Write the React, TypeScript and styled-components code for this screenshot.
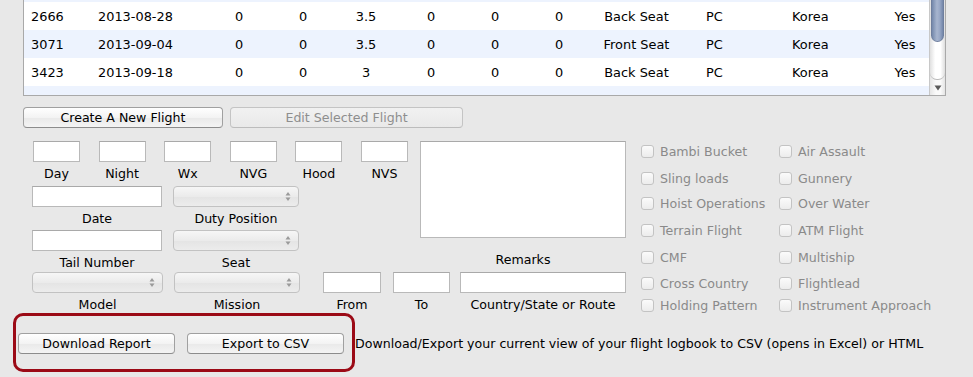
import React from 'react';
import styled, { createGlobalStyle } from 'styled-components';

const GlobalStyle = createGlobalStyle`
  html, body {
    margin: 0;
    padding: 0;
    background: #e8e8e8;
  }
  body {
    font-family: "DejaVu Sans", "Liberation Sans", sans-serif;
    font-size: 12.6px;
    color: #000;
  }
`;

const Page = styled.div`
  width: 973px;
  height: 377px;
  overflow: hidden;
  background: #e8e8e8;
`;

/* ---------- flight table ---------- */

const TableArea = styled.div`
  display: flex;
  margin-left: 23px;
  width: 923px;
  height: 96px;
  border-left: 1px solid #a9a9a9;
  border-bottom: 1px solid #a9a9a9;
  box-sizing: border-box;
  overflow: hidden;
`;

const Rows = styled.div`
  flex: 1;
  overflow: hidden;
`;

const RowList = styled.div`
  margin-top: -26px;
`;

const Row = styled.div<{ $odd: boolean }>`
  display: grid;
  grid-template-columns: 66px 117px 64px 64px 62px 68px 60px 68px 87px 100px 100px 50px;
  height: 28px;
  align-items: center;
  background: ${p => (p.$odd ? '#ffffff' : '#edf3fe')};
  font-size: 12.9px;
`;

const Cell = styled.div<{ $align?: 'left' | 'center'; $pad?: number }>`
  text-align: ${p => p.$align || 'center'};
  padding-left: ${p => p.$pad || 0}px;
  white-space: nowrap;
`;

const Scrollbar = styled.div`
  width: 15px;
  flex-shrink: 0;
  display: flex;
  flex-direction: column;
  border-left: 1px solid #c8c8c8;
  border-right: 1px solid #a9a9a9;
  background: linear-gradient(to right, #e6e6e6, #fafafa 40%, #fafafa 70%, #e4e4e4);
`;

const Track = styled.div`
  flex: 1;
  display: flex;
  flex-direction: column;
  border-bottom: 1px solid #b9b9b9;
  border-radius: 0 0 7px 7px;
  background: linear-gradient(to right, #e0e0e0, #ffffff 35%, #ffffff 70%, #dedede);
`;

const Thumb = styled.div`
  height: 42px;
  margin: 0 1px;
  border-radius: 0 0 7px 7px;
  background: linear-gradient(to right, #7488ab, #a7b5cf 45%, #98a8c6 70%, #7386a9);
  border: 1px solid #6f7f9e;
  border-top: none;
  box-sizing: border-box;
`;

const ArrowBox = styled.div`
  height: 15px;
  display: flex;
  align-items: center;
  justify-content: center;
`;

/* ---------- buttons ---------- */

const ButtonRow = styled.div`
  display: flex;
  gap: 7px;
  margin: 11px 0 0 23px;
`;

const PushButton = styled.button<{ $width: number }>`
  width: ${p => p.$width}px;
  height: 21px;
  padding: 0;
  font-family: "DejaVu Sans", "Liberation Sans", sans-serif;
  font-size: 12.6px;
  color: ${p => (p.disabled ? '#8e8e8e' : '#000')};
  border: 1px solid ${p => (p.disabled ? '#c4c4c4' : '#a0a0a0')};
  border-bottom-color: ${p => (p.disabled ? '#bcbcbc' : '#8c8c8c')};
  border-radius: 4px;
  background: ${p =>
    p.disabled
      ? 'linear-gradient(#f1f1f1, #e9e9e9)'
      : 'linear-gradient(#ffffff, #f3f3f3 50%, #e9e9e9 51%, #f4f4f4)'};
`;

/* ---------- form ---------- */

const Form = styled.div`
  display: flex;
  height: 172px;
  margin-top: 13px;
  padding-left: 32px;
`;

const Fields = styled.div`
  width: 594px;
  display: flex;
  flex-direction: column;
`;

const Upper = styled.div`
  display: flex;
`;

const LeftGrid = styled.div`
  width: 376px;
  display: flex;
  flex-direction: column;
`;

const TimeRow = styled.div`
  display: grid;
  grid-template-columns: repeat(6, 47px);
  column-gap: 18.6px;
  margin-left: 1px;
`;

const PairRow = styled.div<{ $top: number }>`
  display: flex;
  gap: 11px;
  margin-top: ${p => p.$top}px;
`;

const Field = styled.div<{ $gap?: number }>`
  display: flex;
  flex-direction: column;
  align-items: center;
  margin-left: ${p => p.$gap || 0}px;
`;

const TextBox = styled.div<{ $width: number; $height?: number }>`
  width: ${p => p.$width}px;
  height: ${p => p.$height || 21}px;
  box-sizing: border-box;
  background: #fff;
  border: 1px solid #b9b9b9;
  border-top-color: #a9a9a9;
`;

const Select = styled.div<{ $width: number }>`
  width: ${p => p.$width}px;
  height: 21px;
  box-sizing: border-box;
  border: 1px solid #c2c2c2;
  border-radius: 4px;
  background: linear-gradient(#f6f6f6, #ebebeb 50%, #e4e4e4 51%, #ececec);
  display: flex;
  align-items: center;
  justify-content: flex-end;
  padding-right: 7px;
`;

const Label = styled.div`
  margin-top: 4px;
  height: 15px;
  line-height: 15px;
  white-space: nowrap;
`;

const RemarksCol = styled.div`
  margin-left: 12px;
  display: flex;
  flex-direction: column;
  align-items: center;
`;

const RemarksLabel = styled(Label)`
  margin-top: 14px;
`;

const Lower = styled.div`
  display: flex;
  margin-top: 2px;
`;

const Checks = styled.div`
  margin-left: 15px;
  padding-top: 2px;
  display: grid;
  grid-template-columns: 138px auto;
  grid-template-rows: 27px 25px 27px 27px 26px 22px 16px;
`;

const CheckItem = styled.label`
  display: flex;
  align-items: center;
  gap: 6px;
  height: 16px;
  color: #8a8a8a;
  white-space: nowrap;
`;

const CheckBox = styled.span`
  width: 11px;
  height: 11px;
  border: 1px solid #c3c3c3;
  border-radius: 3px;
  background: linear-gradient(#fbfbfb, #ececec);
  flex-shrink: 0;
`;

/* ---------- export ---------- */

const ExportRow = styled.div`
  display: flex;
  align-items: center;
  margin-left: 13px;
`;

const Highlight = styled.div`
  display: flex;
  gap: 12px;
  padding: 17px 8px 15px 2px;
  border: 3px solid #9b0a16;
  border-radius: 10px;
`;

const ExportNote = styled.div`
  margin: 1px 0 0 0;
  white-space: nowrap;
`;

const Stepper = () => (
  <svg width="6" height="11" viewBox="0 0 6 11">
    <path d="M3 1 L5.5 4.5 L0.5 4.5 Z" fill="#9a9a9a" />
    <path d="M3 10 L5.5 6.5 L0.5 6.5 Z" fill="#9a9a9a" />
  </svg>
);

type RowData = string[];

const rows: RowData[] = [
  ['', '', '', '', '', '', '', '', '', '', '', ''],
  ['2666', '2013-08-28', '0', '0', '3.5', '0', '0', '0', 'Back Seat', 'PC', 'Korea', 'Yes'],
  ['3071', '2013-09-04', '0', '0', '3.5', '0', '0', '0', 'Front Seat', 'PC', 'Korea', 'Yes'],
  ['3423', '2013-09-18', '0', '0', '3', '0', '0', '0', 'Back Seat', 'PC', 'Korea', 'Yes'],
  ['3684', '2013-10-02', '1.5', '0', '0', '0', '0', '0', 'Back Seat', 'PC', '', 'Yes'],
];

const timeFields = ['Day', 'Night', 'Wx', 'NVG', 'Hood', 'NVS'];

const checks = [
  'Bambi Bucket', 'Air Assault',
  'Sling loads', 'Gunnery',
  'Hoist Operations', 'Over Water',
  'Terrain Flight', 'ATM Flight',
  'CMF', 'Multiship',
  'Cross Country', 'Flightlead',
  'Holding Pattern', 'Instrument Approach',
];

const FlightTable = () => (
  <TableArea>
    <Rows>
      <RowList>
        {rows.map((r, i) => (
          <Row key={i} $odd={i % 2 === 1}>
            <Cell $align="left" $pad={7}>{r[0]}</Cell>
            <Cell $align="left" $pad={8}>{r[1]}</Cell>
            {r.slice(2, 9).map((v, j) => (
              <Cell key={j}>{v}</Cell>
            ))}
            <Cell $align="left" $pad={26}>{r[9]}</Cell>
            <Cell $align="left" $pad={12}>{r[10]}</Cell>
            <Cell>{r[11]}</Cell>
          </Row>
        ))}
      </RowList>
    </Rows>
    <Scrollbar>
      <Track>
        <Thumb />
      </Track>
      <ArrowBox>
        <svg width="8" height="6" viewBox="0 0 8 6">
          <path d="M0.5 0.5 L7.5 0.5 L4 5.5 Z" fill="#5a5a5a" />
        </svg>
      </ArrowBox>
    </Scrollbar>
  </TableArea>
);

export default function App() {
  return (
    <Page>
      <GlobalStyle />
      <FlightTable />

      <ButtonRow>
        <PushButton $width={200}>Create A New Flight</PushButton>
        <PushButton $width={233} disabled>Edit Selected Flight</PushButton>
      </ButtonRow>

      <Form>
        <Fields>
          <Upper>
            <LeftGrid>
              <TimeRow>
                {timeFields.map(t => (
                  <Field key={t}>
                    <TextBox $width={47} />
                    <Label>{t}</Label>
                  </Field>
                ))}
              </TimeRow>
              <PairRow $top={5}>
                <Field>
                  <TextBox $width={130} />
                  <Label>Date</Label>
                </Field>
                <Field>
                  <Select $width={126}><Stepper /></Select>
                  <Label>Duty Position</Label>
                </Field>
              </PairRow>
              <PairRow $top={4}>
                <Field>
                  <TextBox $width={130} />
                  <Label>Tail Number</Label>
                </Field>
                <Field>
                  <Select $width={126}><Stepper /></Select>
                  <Label>Seat</Label>
                </Field>
              </PairRow>
            </LeftGrid>
            <RemarksCol>
              <TextBox $width={206} $height={97} />
              <RemarksLabel>Remarks</RemarksLabel>
            </RemarksCol>
          </Upper>
          <Lower>
            <Field>
              <Select $width={131}><Stepper /></Select>
              <Label>Model</Label>
            </Field>
            <Field $gap={11}>
              <Select $width={126}><Stepper /></Select>
              <Label>Mission</Label>
            </Field>
            <Field $gap={23}>
              <TextBox $width={58} />
              <Label>From</Label>
            </Field>
            <Field $gap={12}>
              <TextBox $width={57} />
              <Label>To</Label>
            </Field>
            <Field $gap={10}>
              <TextBox $width={166} />
              <Label>Country/State or Route</Label>
            </Field>
          </Lower>
        </Fields>
        <Checks>
          {checks.map(c => (
            <CheckItem key={c}>
              <CheckBox />
              {c}
            </CheckItem>
          ))}
        </Checks>
      </Form>

      <ExportRow>
        <Highlight>
          <PushButton $width={157}>Download Report</PushButton>
          <PushButton $width={157}>Export to CSV</PushButton>
        </Highlight>
        <ExportNote>
          Download/Export your current view of your flight logbook to CSV (opens in Excel) or HTML
        </ExportNote>
      </ExportRow>
    </Page>
  );
}
